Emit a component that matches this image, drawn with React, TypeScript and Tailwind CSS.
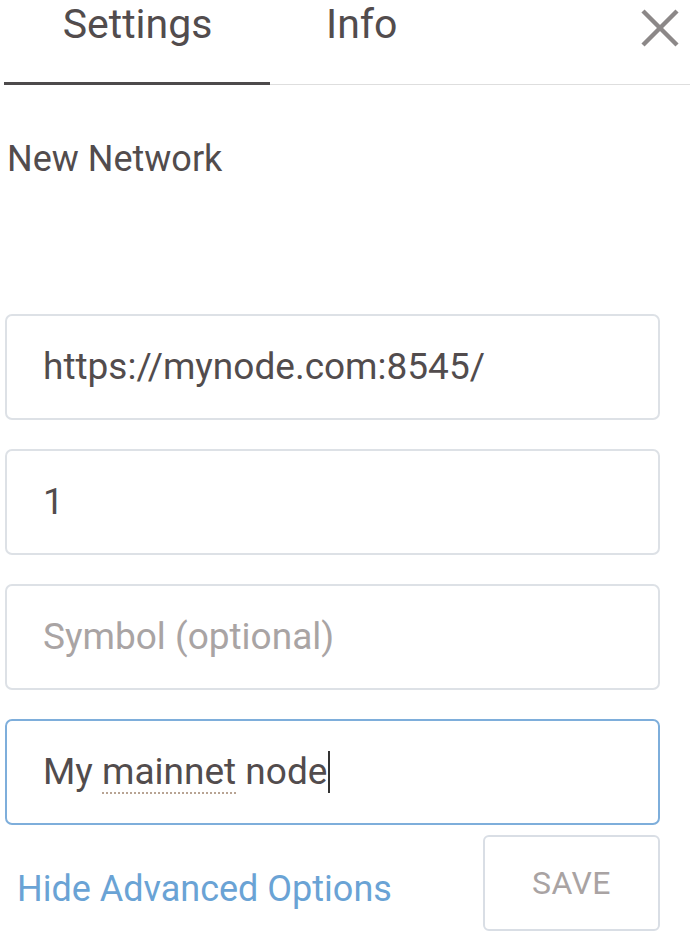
import React from "react";

const font = { fontFamily: "Roboto, 'Noto Sans', sans-serif" };

function Field({ children, focused }: { children: React.ReactNode; focused?: boolean }) {
  return (
    <div
      className={
        "w-[655px] h-[106px] rounded-[7px] border-2 bg-white flex items-center pl-[36px] text-[37px] " +
        (focused ? "border-[#7eaedb]" : "border-[#dde1e6]")
      }
    >
      {children}
    </div>
  );
}

export default function App() {
  return (
    <div className="w-[700px] h-[939px] bg-white text-[#524c4d] overflow-hidden" style={font}>
      {/* tabs */}
      <div className="flex pl-[4px] pr-[10px] h-[85px]">
        <div className="w-[266px] border-b-[3px] border-[#4d4a4b] flex justify-center">
          <span className="text-[41px] leading-[48px] pl-[1px]">Settings</span>
        </div>
        <div className="flex-1 border-b border-[#dedede] flex items-start">
          <span className="text-[41px] leading-[48px] ml-[56px]">Info</span>
          <div className="ml-auto mr-[10px] mt-[8px]">
            <svg width="40" height="40" viewBox="0 0 40 40">
              <line x1="3" y1="3" x2="37" y2="37" stroke="#8c8888" strokeWidth="4.5" />
              <line x1="37" y1="3" x2="3" y2="37" stroke="#8c8888" strokeWidth="4.5" />
            </svg>
          </div>
        </div>
      </div>

      <div className="pl-[7px] mt-[56px] text-[36px] leading-[36px]">New Network</div>

      <div className="flex flex-col gap-[29px] ml-[5px] mt-[137px]">
        <Field>https://mynode.com:8545/</Field>
        <Field>1</Field>
        <Field>
          <span className="text-[#a9a4a4]">Symbol (optional)</span>
        </Field>
        <Field focused>
          <span>
            My{" "}
            <span className="underline decoration-dotted decoration-[#b8a494] decoration-2 underline-offset-[8px]">
              mainnet
            </span>{" "}
            node
          </span>
          <span className="inline-block w-[2px] h-[42px] bg-[#333] ml-[1px]" />
        </Field>
      </div>

      <div className="flex items-start ml-[5px] mt-[10px] w-[655px]">
        <span className="text-[36px] text-[#6aa3d5] mt-[27px] ml-[12px]">Hide Advanced Options</span>
        <button className="ml-auto w-[177px] h-[96px] rounded-[6px] border-2 border-[#d9dee5] text-[32px] text-[#a9a3a3] tracking-[0.5px]">
          SAVE
        </button>
      </div>
    </div>
  );
}
